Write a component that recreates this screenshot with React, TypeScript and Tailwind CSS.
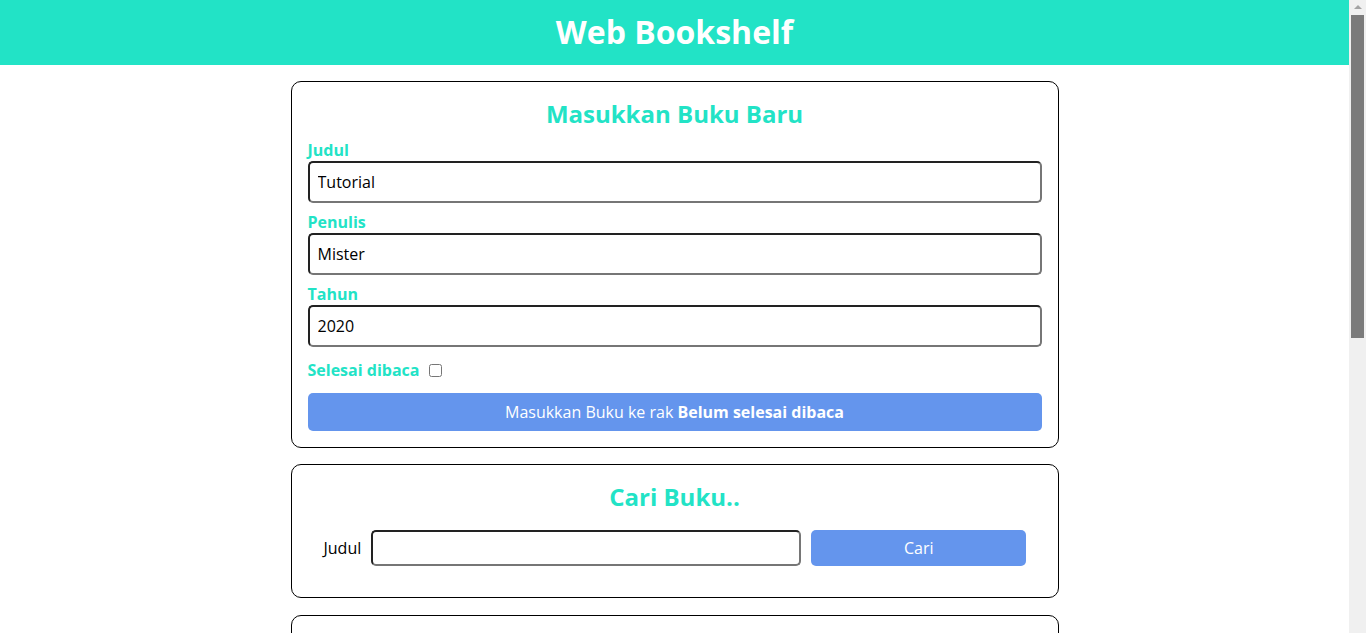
import React from "react";

const inputCls =
  "block w-full h-[42px] px-2 text-[16px] text-black bg-white rounded-[5px] border-2 border-t-[#222222] border-l-[#222222] border-b-[#767676] border-r-[#767676] outline-none";

function Field({ label, value, type = "text" }: { label: string; value: string; type?: string }) {
  return (
    <div className="mb-2">
      <label className="block h-[22px] leading-[22px] font-bold text-[16px] text-[#22e3c6]">{label}</label>
      <input className={inputCls} type={type} defaultValue={value} />
    </div>
  );
}

function Book({ title, author, year, done }: { title: string; author: string; year: string; done: boolean }) {
  return (
    <article className="rounded-[5px] border border-black p-4 mb-2">
      <h3 className="text-[20px] font-bold leading-[30px]">{title}</h3>
      <p className="leading-[26px]">Penulis: {author}</p>
      <p className="leading-[26px]">Tahun: {year}</p>
      <div className="flex gap-2 mt-2">
        <button className="px-3 py-1 rounded-[5px] bg-[#22e3c6] text-white">
          {done ? "Belum selesai di Baca" : "Selesai dibaca"}
        </button>
        <button className="px-3 py-1 rounded-[5px] bg-[#ff4f4f] text-white">Hapus buku</button>
      </div>
    </article>
  );
}

function FakeScrollbar() {
  return (
    <div className="fixed top-0 right-0 w-[17px] h-screen bg-[#f0f0f0] z-10">
      <div className="flex justify-center pt-[5px]">
        <div className="w-0 h-0 border-l-[4px] border-r-[4px] border-b-[4px] border-l-transparent border-r-transparent border-b-[#a3a3a3]" />
      </div>
      <div className="absolute left-[2px] top-[15px] w-[13px] h-[323px] bg-[#7b7b7b]" />
    </div>
  );
}

export default function App() {
  return (
    <div className="min-h-screen bg-white text-black pr-[17px]" style={{ fontFamily: '"Open Sans", sans-serif' }}>
      <header className="h-[65px] bg-[#22e3c6] flex items-center justify-center">
        <h1 className="text-[32px] font-bold text-white leading-none -mt-[2px]">Web Bookshelf</h1>
      </header>
      <main className="max-w-[768px] mx-auto pb-4">
        <section className="mt-4 border border-black rounded-[10px] px-4 pt-[14px] pb-4">
          <h2 className="text-center text-[24px] font-bold leading-[36px] text-[#22e3c6]">Masukkan Buku Baru</h2>
          <form className="mt-[7px]" onSubmit={(e) => e.preventDefault()}>
            <Field label="Judul" value="Tutorial" />
            <Field label="Penulis" value="Mister" />
            <Field label="Tahun" value="2020" type="number" />
            <div className="h-[30px] flex items-center">
              <label className="font-bold text-[16px] text-[#22e3c6]">Selesai dibaca</label>
              <input type="checkbox" className="ml-[10px] w-[13px] h-[13px] mt-[1px]" />
            </div>
            <button
              type="submit"
              className="mt-2 w-full h-[38px] rounded-[5px] bg-[#6495ed] text-white text-[16px]"
            >
              Masukkan Buku ke rak <span className="font-bold">Belum selesai dibaca</span>
            </button>
          </form>
        </section>

        <section className="mt-4 border border-black rounded-[10px] px-4 pt-[14px] pb-[31px]">
          <h2 className="text-center text-[24px] font-bold leading-[36px] text-[#22e3c6]">Cari Buku..</h2>
          <form className="mt-[15px] px-[16px] flex items-center" onSubmit={(e) => e.preventDefault()}>
            <label className="text-[16px] mr-[10px]">Judul</label>
            <input
              className="w-[430px] shrink-0 h-[36px] px-2 text-[16px] bg-white rounded-[5px] border-2 border-t-[#222222] border-l-[#222222] border-b-[#767676] border-r-[#767676] outline-none"
              type="text"
            />
            <button className="w-[215px] shrink-0 ml-[10px] h-[36px] rounded-[5px] bg-[#6495ed] text-white text-[16px]">
              Cari
            </button>
          </form>
        </section>

        <section className="mt-[17px] border border-black rounded-[10px] p-4">
          <h2 className="text-center text-[24px] font-bold leading-[36px] text-[#22e3c6] mb-2">Belum selesai dibaca</h2>
          <Book title="Tutorial" author="Mister" year="2020" done={false} />
        </section>

        <section className="mt-4 border border-black rounded-[10px] p-4">
          <h2 className="text-center text-[24px] font-bold leading-[36px] text-[#22e3c6] mb-2">Selesai dibaca</h2>
          <Book title="Belajar React" author="Dicoding" year="2021" done={true} />
        </section>
      </main>
      <FakeScrollbar />
    </div>
  );
}
